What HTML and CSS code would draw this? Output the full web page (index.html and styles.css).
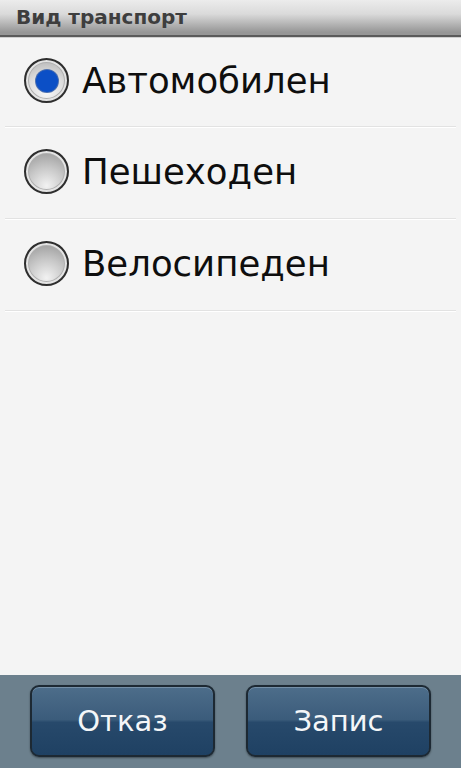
FILE: index.html
```html
<!DOCTYPE html>
<html lang="bg">
<head>
    <meta charset="UTF-8">
    <meta name="viewport" content="width=device-width, initial-scale=1.0">
    <title>Вид транспорт</title>
    <link rel="stylesheet" href="styles.css">
</head>
<body>
    <div class="screen">
        <div class="title-bar">Вид транспорт</div>

        <div class="options">
            <label class="option">
                <input type="radio" name="mode" checked>
                <span class="radio"></span>
                <span class="option-text">Автомобилен</span>
            </label>
            <label class="option">
                <input type="radio" name="mode">
                <span class="radio"></span>
                <span class="option-text">Пешеходен</span>
            </label>
            <label class="option">
                <input type="radio" name="mode">
                <span class="radio"></span>
                <span class="option-text">Велосипеден</span>
            </label>
        </div>

        <div class="button-bar">
            <button class="bar-button">Отказ</button>
            <button class="bar-button">Запис</button>
        </div>
    </div>
</body>
</html>
```

FILE: styles.css
```css
* {
    margin: 0;
    padding: 0;
    box-sizing: border-box;
    font-family: 'DejaVu Sans', 'Liberation Sans', sans-serif;
}

body {
    background: #f4f4f4;
    color: #111;
}

.screen {
    display: flex;
    flex-direction: column;
    height: 768px;
}

.title-bar {
    height: 37px;
    padding: 5px 0 0 16px;
    font-size: 20px;
    line-height: 24px;
    font-weight: bold;
    color: #3e3e3e;
    background: linear-gradient(#ececec, #dadada 40%, #969696 92%);
    border-bottom: 2px solid #5a5a5a;
    box-shadow: 0 1px 0 #cfcfcf;
}

.options {
    flex: 1;
    padding: 0 5px;
}

.option {
    display: flex;
    align-items: center;
    height: 92px;
    padding: 0 0 2px 19px;
    border-bottom: 1px solid #e2e2e2;
    box-shadow: 0 1px 0 #ffffff;
    cursor: pointer;
}

.option:first-child {
    height: 90px;
}

.option input {
    display: none;
}

.radio {
    position: relative;
    flex: none;
    width: 45px;
    height: 45px;
    border-radius: 50%;
    border: 2px solid #2e2e2e;
    background: radial-gradient(circle at 50% 85%, #f2f2f2 0%, #c8c8c8 45%, #a4a4a4 80%, #9c9c9c 100%);
    box-shadow: inset 0 0 0 2px #e4e4e4, inset 0 0 0 3px #b0b0b0;
}

.option input:checked + .radio {
    background: radial-gradient(circle at 50% 80%, #f6f6f6 0%, #dcdcdc 50%, #a8a8a8 100%);
}

.option input:checked + .radio::after {
    content: '';
    position: absolute;
    top: 9.5px;
    left: 9.5px;
    width: 22px;
    height: 22px;
    border-radius: 50%;
    background: #0b4fc6;
    box-shadow: 0 0 0 1px #4a6fb0;
}

.option-text {
    margin-left: 13px;
    font-size: 35.5px;
    color: #0e0e0e;
}

.button-bar {
    display: flex;
    gap: 31px;
    height: 93px;
    padding: 10px 30px 0;
    background: #6c808d;
}

.bar-button {
    width: 185px;
    height: 72px;
    font-size: 29px;
    color: #f4f6f8;
    background: linear-gradient(#4d6d8a, #3b5c7b 48%, #27496b 52%, #1f4163);
    border: 2px solid #1d2933;
    border-radius: 9px;
    box-shadow: inset 0 1px 0 #7590a8, 0 1px 2px rgba(0, 0, 0, 0.4);
    cursor: pointer;
}
```
